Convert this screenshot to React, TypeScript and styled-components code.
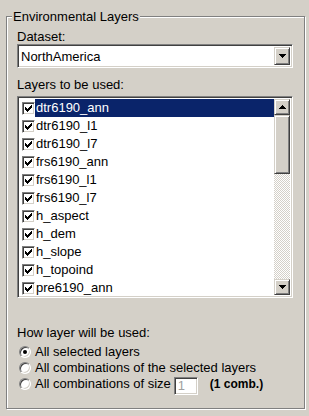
import React from "react";
import styled, { createGlobalStyle } from "styled-components";

const GlobalStyle = createGlobalStyle`
    html, body {
        margin: 0;
        padding: 0;
        background: #d4d0c8;
    }
    body {
        font-family: "Liberation Sans", Arial, sans-serif;
        font-size: 13px;
        color: #000;
    }
`;

const face = "#d4d0c8";
const shadow = "#808080";
const darkShadow = "#404040";

const Page = styled.div`
    width: 309px;
    height: 416px;
    box-sizing: border-box;
    padding: 16px 0 0 6px;
`;

const GroupBox = styled.div`
    position: relative;
    box-sizing: border-box;
    width: 299px;
    height: 393px;
    border: 1px solid ${shadow};
    box-shadow: inset 1px 1px #fff, 1px 1px #fff;
    padding: 12px 11px 0 10px;
    display: flex;
    flex-direction: column;
`;

const Legend = styled.div`
    position: absolute;
    top: -8px;
    left: 5px;
    padding: 0 1px;
    background: ${face};
    line-height: 15px;
`;

const Label = styled.div<{ $mt?: number; $mb?: number }>`
    line-height: 15px;
    height: 15px;
    margin-top: ${(p) => p.$mt ?? 0}px;
    margin-bottom: ${(p) => p.$mb ?? 0}px;
    white-space: nowrap;
`;

const Sunken = styled.div`
    box-sizing: border-box;
    border: 1px solid;
    border-color: ${shadow} #fff #fff ${shadow};
    box-shadow: inset 1px 1px ${darkShadow}, inset -1px -1px ${face};
    background: #fff;
`;

const Combo = styled(Sunken)`
    height: 24px;
    display: flex;
    padding: 2px;
`;

const ComboText = styled.div`
    flex: 1;
    line-height: 20px;
    padding-left: 1px;
`;

const RaisedButton = styled.div<{ $h?: number }>`
    box-sizing: border-box;
    width: 16px;
    height: ${(p) => (p.$h ? `${p.$h}px` : "auto")};
    background: ${face};
    border: 1px solid;
    border-color: ${face} ${darkShadow} ${darkShadow} ${face};
    box-shadow: inset 1px 1px #fff, inset -1px -1px ${shadow};
    display: flex;
    align-items: center;
    justify-content: center;
    flex-shrink: 0;
`;

const ListBox = styled(Sunken)`
    height: 202px;
    margin-top: 4px;
    display: flex;
    padding: 2px;
`;

const Items = styled.div`
    flex: 1;
    display: flex;
    flex-direction: column;
    overflow: hidden;
`;

const Row = styled.div`
    height: 18px;
    display: flex;
    align-items: center;
`;

const CheckBox = styled(Sunken)`
    width: 13px;
    height: 13px;
    margin-left: 2px;
    position: relative;
    flex-shrink: 0;
`;

const ItemText = styled.div<{ $selected?: boolean }>`
    flex: 1;
    height: 18px;
    line-height: 18px;
    padding-left: 1px;
    white-space: nowrap;
    background: ${(p) => (p.$selected ? "#0a246a" : "transparent")};
    color: ${(p) => (p.$selected ? "#fff" : "#000")};
`;

const ScrollBar = styled.div`
    width: 16px;
    display: flex;
    flex-direction: column;
`;

const Track = styled.div`
    flex: 1;
    background: repeating-conic-gradient(#fff 0 25%, ${face} 0 50%) 0 0 / 2px 2px;
`;

const RadioGroup = styled.div`
    display: flex;
    flex-direction: column;
`;

const RadioRow = styled.div`
    height: 16px;
    display: flex;
    align-items: center;
    line-height: 16px;
    white-space: nowrap;
`;

const RadioCircle = styled.div<{ $checked?: boolean }>`
    box-sizing: border-box;
    width: 12px;
    height: 12px;
    border-radius: 50%;
    margin: 0 4px 0 2px;
    border: 1px solid;
    border-color: ${shadow} #fff #fff ${shadow};
    box-shadow: inset 1px 1px ${darkShadow}, inset -1px -1px ${face};
    background: #fff;
    display: flex;
    align-items: center;
    justify-content: center;
    flex-shrink: 0;

    &::after {
        content: "";
        display: ${(p) => (p.$checked ? "block" : "none")};
        width: 4px;
        height: 4px;
        border-radius: 50%;
        background: #000;
    }
`;

const SizeInput = styled(Sunken)`
    width: 24px;
    height: 18px;
    margin-left: 3px;
    align-self: flex-start;
    margin-top: 1px;
    padding: 0 3px;
    line-height: 15px;
    color: #a0a0a0;
`;

const CombNote = styled.span`
    font-size: 12px;
    font-weight: bold;
    margin-left: 12px;
`;

const Arrow = ({ up }: { up?: boolean }) => (
    <svg width="7" height="4" viewBox="0 0 7 4" shapeRendering="crispEdges">
        <path d={up ? "M3 0h1v1h1v1h1v1h1v1H0V3h1V2h1V1h1z" : "M0 0h7v1H6v1H5v1H4v1H3V3H2V2H1V1H0z"} fill="#000" />
    </svg>
);

const Check = () => (
    <svg
        width="13"
        height="13"
        viewBox="0 0 13 13"
        shapeRendering="crispEdges"
        style={{ position: "absolute", left: -1, top: -1 }}
    >
        <path
            d="M3 5h1v3H3zM4 6h1v3H4zM5 7h1v3H5zM6 6h1v3H6zM7 5h1v3H7zM8 4h1v3H8zM9 3h1v3H9z"
            fill="#000"
        />
    </svg>
);

const layers = [
    "dtr6190_ann",
    "dtr6190_l1",
    "dtr6190_l7",
    "frs6190_ann",
    "frs6190_l1",
    "frs6190_l7",
    "h_aspect",
    "h_dem",
    "h_slope",
    "h_topoind",
    "pre6190_ann",
];

const App = () => {
    return (
        <Page>
            <GlobalStyle />
            <GroupBox>
                <Legend>Environmental Layers</Legend>
                <Label>Dataset:</Label>
                <Combo>
                    <ComboText>NorthAmerica</ComboText>
                    <RaisedButton>
                        <Arrow />
                    </RaisedButton>
                </Combo>
                <Label $mt={9}>Layers to be used:</Label>
                <ListBox>
                    <Items>
                        {layers.map((name, i) => (
                            <Row key={name}>
                                <CheckBox>
                                    <Check />
                                </CheckBox>
                                <ItemText $selected={i === 0}>{name}</ItemText>
                            </Row>
                        ))}
                    </Items>
                    <ScrollBar>
                        <RaisedButton $h={16}>
                            <Arrow up />
                        </RaisedButton>
                        <RaisedButton $h={59} />
                        <Track />
                        <RaisedButton $h={16}>
                            <Arrow />
                        </RaisedButton>
                    </ScrollBar>
                </ListBox>
                <Label $mt={27} $mb={4}>How layer will be used:</Label>
                <RadioGroup>
                    <RadioRow>
                        <RadioCircle $checked />
                        All selected layers
                    </RadioRow>
                    <RadioRow>
                        <RadioCircle />
                        All combinations of the selected layers
                    </RadioRow>
                    <RadioRow>
                        <RadioCircle />
                        All combinations of size
                        <SizeInput>1</SizeInput>
                        <CombNote>(1 comb.)</CombNote>
                    </RadioRow>
                </RadioGroup>
            </GroupBox>
        </Page>
    );
};

export default App;
